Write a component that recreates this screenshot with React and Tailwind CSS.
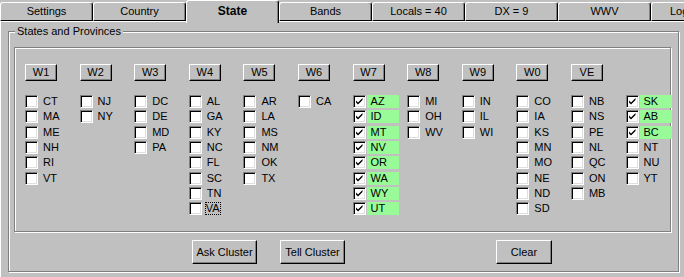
import React from "react";

const tabs = ["Settings", "Country", "State", "Bands", "Locals = 40", "DX = 9", "WWV", "Logging"];

const cols = [
  { btn: "W1", items: ["CT", "MA", "ME", "NH", "RI", "VT"] },
  { btn: "W2", items: ["NJ", "NY"] },
  { btn: "W3", items: ["DC", "DE", "MD", "PA"] },
  { btn: "W4", items: ["AL", "GA", "KY", "NC", "FL", "SC", "TN", "VA"] },
  { btn: "W5", items: ["AR", "LA", "MS", "NM", "OK", "TX"] },
  { btn: "W6", items: ["CA"] },
  { btn: "W7", items: ["AZ", "ID", "MT", "NV", "OR", "WA", "WY", "UT"], checked: [0, 1, 2, 3, 4, 5, 6, 7] },
  { btn: "W8", items: ["MI", "OH", "WV"] },
  { btn: "W9", items: ["IN", "IL", "WI"] },
  { btn: "W0", items: ["CO", "IA", "KS", "MN", "MO", "NE", "ND", "SD"] },
  { btn: "VE", items: ["NB", "NS", "PE", "NL", "QC", "ON", "MB"] },
  { btn: null, items: ["SK", "AB", "BC", "NT", "NU", "YT"], checked: [0, 1, 2] },
];

function Check({ checked }) {
  return (
    <div className="w-[13px] h-[13px] shrink-0 bg-white border-t border-l border-t-[#808080] border-l-[#808080] border-r border-b border-r-white border-b-white shadow-[inset_1px_1px_0_#000,inset_-1px_-1px_0_#dfdfdf] flex items-center justify-center">
      {checked && (
        <svg width="9" height="9" viewBox="0 0 9 9" className="block">
          <path d="M1 3.5 L3 5.5 L7.5 1 L7.5 3 L3 7.5 L1 5.5 Z" fill="#000" />
        </svg>
      )}
    </div>
  );
}

function WinButton({ children, className }) {
  return (
    <div
      className={
        "flex items-center justify-center bg-[#c0c0c0] border-t border-l border-t-white border-l-white border-r border-b border-r-black border-b-black shadow-[inset_-1px_-1px_0_#808080] text-[11px] text-black " +
        (className || "")
      }
    >
      {children}
    </div>
  );
}

export default function App() {
  return (
    <div
      className="w-[684px] h-[277px] bg-[#c0c0c0] overflow-hidden text-black"
      style={{ fontFamily: '"Liberation Sans", Arial, sans-serif' }}
    >
      {/* Tabs */}
      <div className="flex h-[21px] w-[760px] relative z-10">
        {tabs.map((t, i) => {
          const sel = t === "State";
          const last = i === tabs.length - 1;
          return sel ? (
            <div
              key={t}
              className="w-[93px] h-[23px] shrink-0 bg-[#c0c0c0] border-t border-l border-t-white border-l-white border-r border-r-black shadow-[inset_-1px_0_0_#808080] rounded-t-[3px] flex items-center justify-center font-bold text-[12px] pb-[3px]"
            >
              {t}
            </div>
          ) : (
            <div key={t} className="w-[93px] h-[21px] shrink-0 flex flex-col justify-end">
              <div
                className={
                  "h-[19px] border-t border-l border-t-white border-l-white border-r border-r-black shadow-[inset_-1px_0_0_#808080] rounded-t-[3px] border-b border-b-black flex items-center text-[11px] " +
                  (last ? "justify-start pl-[18px]" : "justify-center")
                }
              >
                {t}
              </div>
            </div>
          );
        })}
      </div>

      {/* Panel */}
      <div className="border-t border-l border-t-white border-l-white h-[260px]">
        {/* Group box */}
        <div className="relative ml-[7px] mt-[9px] w-[671px] h-[241px] border border-[#808080] shadow-[inset_1px_1px_0_#fff,1px_1px_0_#fff]">
          <div className="absolute left-[6px] top-[-7px] px-[2px] bg-[#c0c0c0] text-[11px] leading-[13px]">
            States and Provinces
          </div>

          {/* Inner box */}
          <div className="ml-[5px] mt-[15px] w-[657px] h-[185px] border border-[#808080] shadow-[inset_1px_1px_0_#fff,1px_1px_0_#fff] pl-[10px] pt-[16px]">
            <div className="grid grid-cols-[repeat(12,54.6px)]">
              {cols.map((c, ci) => (
                <div key={ci} className="flex flex-col">
                  {c.btn ? (
                    <WinButton className="w-[32px] h-[17px]">{c.btn}</WinButton>
                  ) : (
                    <div className="h-[17px]" />
                  )}
                  <div className="mt-[13px] flex flex-col">
                    {c.items.map((it, ii) => {
                      const checked = c.checked && c.checked.includes(ii);
                      const focus = it === "VA";
                      return (
                        <div key={it} className="flex items-center h-[15.33px]">
                          <Check checked={checked} />
                          <div
                            className={
                              "ml-[1px] pl-[3px] h-[13px] w-[32px] flex items-center text-[11px] leading-[13px] " +
                              (checked ? "bg-[#98fb98]" : "")
                            }
                          >
                            {focus ? (
                              <span className="outline outline-1 outline-dotted outline-black leading-[11px]">{it}</span>
                            ) : (
                              <span className="pl-[1px]">{it}</span>
                            )}
                          </div>
                        </div>
                      );
                    })}
                  </div>
                </div>
              ))}
            </div>
          </div>

          {/* Bottom buttons */}
          <div className="flex mt-[8px] pl-[183px]">
            <WinButton className="w-[65px] h-[24px]">Ask Cluster</WinButton>
            <WinButton className="w-[65px] h-[24px] ml-[23px]">Tell Cluster</WinButton>
            <WinButton className="w-[56px] h-[24px] ml-[151px]">Clear</WinButton>
          </div>
        </div>
      </div>
    </div>
  );
}
